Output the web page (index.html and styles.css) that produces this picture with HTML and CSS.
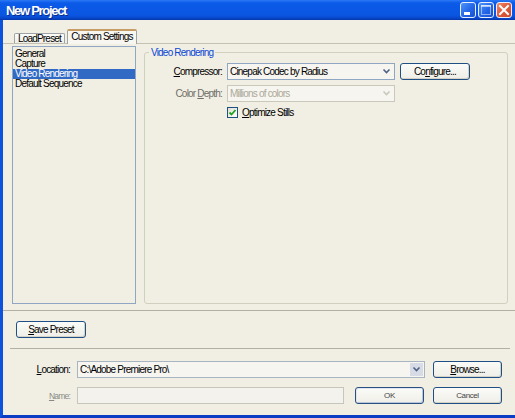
FILE: index.html
```html
<!DOCTYPE html>
<html>
<head>
<meta charset="utf-8">
<title>New Project</title>
<link rel="stylesheet" href="styles.css">
</head>
<body>
<div class="window">
  <div class="titlebar">
    <span class="title">New Project</span>
    <div class="tb-buttons">
      <span class="tb-btn"><svg width="14" height="14" viewBox="0 0 14 14"><rect x="3" y="9" width="6" height="3" fill="#fff"/></svg></span>
      <span class="tb-btn"><svg width="14" height="14" viewBox="0 0 14 14"><rect x="2.5" y="2.5" width="9" height="9" fill="none" stroke="#fff" stroke-width="1" stroke-dasharray="1 1"/><rect x="2" y="2" width="10" height="2" fill="#fff" opacity="0.6"/></svg></span>
      <span class="tb-btn close"><svg width="14" height="14" viewBox="0 0 14 14"><path d="M3 3 L11 11 M11 3 L3 11" stroke="#fff" stroke-width="2" stroke-linecap="square"/></svg></span>
    </div>
  </div>
  <div class="client">
    <div class="tabs">
      <div class="tab tab-load">LoadPreset</div>
      <div class="tab tab-active">Custom Settings</div>
    </div>
    <div class="main">
      <ul class="list">
        <li class="item">General</li>
        <li class="item">Capture</li>
        <li class="item item-selected">Video Rendering</li>
        <li class="item">Default Sequence</li>
      </ul>
      <fieldset class="group">
        <legend class="legend">Video Rendering</legend>
        <div class="grow grow-first">
          <span class="glabel"><u>C</u>ompressor:</span>
          <div class="combo">
            <span class="combo-text">Cinepak Codec by Radius</span>
            <span class="combo-arrow"><svg width="9" height="7" viewBox="0 0 9 7"><path d="M1.5 1.5 L4.5 4.5 L7.5 1.5" fill="none" stroke="#4d6185" stroke-width="1.6"/></svg></span>
          </div>
          <span class="btn btn-config">Co<u>n</u>figure...</span>
        </div>
        <div class="grow">
          <span class="glabel glabel-dim">Color <u>D</u>epth:</span>
          <div class="combo combo-disabled">
            <span class="combo-text">Millions of colors</span>
            <span class="combo-arrow"><svg width="9" height="7" viewBox="0 0 9 7"><path d="M1.5 1.5 L4.5 4.5 L7.5 1.5" fill="none" stroke="#c9c7ba" stroke-width="1.6"/></svg></span>
          </div>
        </div>
        <div class="grow grow-check">
          <span class="check"><svg width="9" height="9" viewBox="0 0 9 9"><path d="M1.5 4.5 L3.5 6.5 L7.5 2" fill="none" stroke="#21a121" stroke-width="1.8"/></svg></span>
          <span class="check-label"><u>O</u>ptimize Stills</span>
        </div>
      </fieldset>
    </div>
    <div class="sep sep-full"></div>
    <div class="save-row">
      <span class="btn btn-save"><u>S</u>ave Preset</span>
    </div>
    <div class="sep sep-inset"></div>
    <div class="frow frow-loc">
      <span class="flabel"><u>L</u>ocation:</span>
      <div class="combo combo-loc">
        <span class="combo-text">C:\Adobe Premiere Pro\</span>
        <span class="combo-arrow combo-arrow-box"><svg width="9" height="7" viewBox="0 0 9 7"><path d="M1.5 1.5 L4.5 4.5 L7.5 1.5" fill="none" stroke="#4d6185" stroke-width="1.6"/></svg></span>
      </div>
      <span class="btn btn-browse"><u>B</u>rowse...</span>
    </div>
    <div class="frow frow-name">
      <span class="flabel flabel-dim"><u>N</u>ame:</span>
      <div class="input-name"></div>
      <span class="btn btn-ok">OK</span>
      <span class="btn btn-cancel">Cancel</span>
    </div>
  </div>
</div>
</body>
</html>
```

FILE: styles.css
```css
* { box-sizing: border-box; }

body {
  margin: 0;
  font-family: "Liberation Sans", Arial, sans-serif;
  font-size: 10px;
  letter-spacing: -0.8px;
  color: #000;
  background: #f1efe4;
}

.window {
  width: 515px;
  height: 418px;
  display: flex;
  flex-direction: column;
  overflow: hidden;
}

.titlebar {
  height: 20px;
  flex: none;
  display: flex;
  align-items: center;
  justify-content: space-between;
  padding: 0 3px 0 6px;
  background: linear-gradient(to bottom, #2b78f5 0, #0b5ae8 3px, #0a56e2 15px, #0848cc 18px, #0535a8 20px);
}

.title {
  color: #fff;
  font-weight: bold;
  font-size: 13px;
  letter-spacing: -1.3px;
  text-shadow: 1px 1px 0 #0a2c8c;
}

.tb-buttons {
  display: flex;
  gap: 2px;
  margin-top: -1px;
}

.tb-btn {
  width: 16px;
  height: 16px;
  display: flex;
  align-items: center;
  justify-content: center;
  border: 1px solid #e8eefc;
  border-radius: 3px;
  background: linear-gradient(135deg, #4d95fb 0%, #2466e8 55%, #1850d0 100%);
}

.tb-btn.close {
  background: linear-gradient(135deg, #f08c6a 0%, #e0583a 50%, #c84a2c 100%);
}

.client {
  flex: 1;
  display: flex;
  flex-direction: column;
  background: #f1efe4;
  border-left: 3px solid #0b52dc;
  border-bottom: 3px solid #0a3cc4;
}

/* Tabs */
.tabs {
  margin-top: 9px;
  height: 15px;
  padding-left: 11px;
  display: flex;
  align-items: flex-end;
  gap: 2px;
  border-bottom: 1px solid #c4c1b3;
  flex: none;
}

.tab {
  text-align: center;
  border: 1px solid #9ea3a6;
  border-bottom: none;
  border-radius: 2px 2px 0 0;
  background: linear-gradient(to bottom, #fdfdfb, #efeee6);
  line-height: 9px;
  height: 10px;
}

.tab-load {
  width: 51px;
}

.tab-active {
  width: 70px;
  height: 15px;
  margin-bottom: -1px;
  border-top: 2px solid #c79d66;
  background: #f7f6f0;
  line-height: 11px;
  padding-top: 0;
}

/* Main area */
.main {
  margin-top: 2px;
  padding-left: 9px;
  display: flex;
  align-items: flex-start;
  flex: none;
}

.list {
  margin: 0;
  padding: 2px 0 0 0;
  list-style: none;
  width: 124px;
  height: 258px;
  border: 1px solid #8fa7c3;
}

.item {
  height: 10px;
  line-height: 10px;
  padding-left: 2px;
  white-space: nowrap;
}

.item-selected {
  background: #316ac5;
  color: #fff;
}

.group {
  margin: 1px 0 0 8px;
  padding: 0;
  width: 364px;
  height: 257px;
  border: 1px solid #d0d0bf;
  border-radius: 3px;
  min-width: 0;
}

.legend {
  margin-left: 4px;
  padding: 0 2px;
  line-height: 11px;
  color: #0a46d5;
}

.grow {
  display: flex;
  align-items: center;
  height: 17px;
  margin-top: 5px;
}

.grow-first {
  margin-top: 5px;
}

.glabel {
  width: 77px;
  text-align: right;
  margin-right: 5px;
  white-space: nowrap;
}

.glabel-dim {
  color: #6e6d66;
}

.combo {
  width: 168px;
  height: 17px;
  border: 1px solid #8fa7c3;
  background: #f6f5f0;
  display: flex;
  align-items: center;
  justify-content: space-between;
  padding-left: 2px;
}

.combo-text {
  white-space: nowrap;
}

.combo-arrow {
  width: 13px;
  height: 13px;
  margin-right: 1px;
  display: flex;
  align-items: center;
  justify-content: center;
}

.combo-arrow-box {
  background: #d6dbe6;
}

.combo-disabled {
  border-color: #cac8bb;
  color: #aca899;
}

.btn {
  display: flex;
  align-items: center;
  justify-content: center;
  height: 17px;
  border: 1px solid #1f4f84;
  border-radius: 3px;
  background: linear-gradient(to bottom, #fbfbf8, #efeee7);
  box-shadow: inset -1px -1px 0 #d4d2c6;
  white-space: nowrap;
}

.btn-config {
  width: 70px;
  margin-left: 5px;
}

.grow-check {
  padding-left: 82px;
  height: 11px;
}

.check {
  width: 11px;
  height: 11px;
  border: 1px solid #1c5180;
  background: linear-gradient(135deg, #e0ded4, #fff);
  display: flex;
  align-items: center;
  justify-content: center;
  margin-right: 4px;
}

.check-label {
  white-space: nowrap;
}

/* Separators */
.sep {
  height: 1px;
  background: #b2b0a4;
  flex: none;
}

.sep-full {
  margin-top: 6px;
}

.sep-inset {
  margin: 10px 5px 0 7px;
}

.save-row {
  margin-top: 10px;
  padding-left: 13px;
  display: flex;
  flex: none;
}

.btn-save {
  width: 70px;
}

/* Bottom form rows */
.frow {
  display: flex;
  align-items: center;
  height: 17px;
  flex: none;
}

.frow-loc {
  margin-top: 12px;
}

.frow-name {
  margin-top: 9px;
}

.flabel {
  width: 67px;
  text-align: right;
  margin-right: 7px;
  white-space: nowrap;
}

.flabel-dim {
  color: #8a8a84;
  font-size: 8.5px;
}

.combo-loc {
  width: 348px;
  border-color: #a9b4c2;
}

.btn-browse {
  width: 69px;
  margin-left: 8px;
}

.input-name {
  width: 267px;
  height: 17px;
  border: 1px solid #c7c6bc;
  background: #f3f2ec;
}

.btn-ok {
  width: 69px;
  margin-left: 11px;
  font-size: 8px;
  letter-spacing: -0.4px;
  color: #444;
  border-color: #2a4f80;
  box-shadow: inset -1px -1px 0 #b9c6da, inset 1px 1px 0 #dfe6f0;
}

.btn-cancel {
  width: 69px;
  margin-left: 9px;
  font-size: 8px;
  letter-spacing: -0.4px;
  color: #444;
}
```
